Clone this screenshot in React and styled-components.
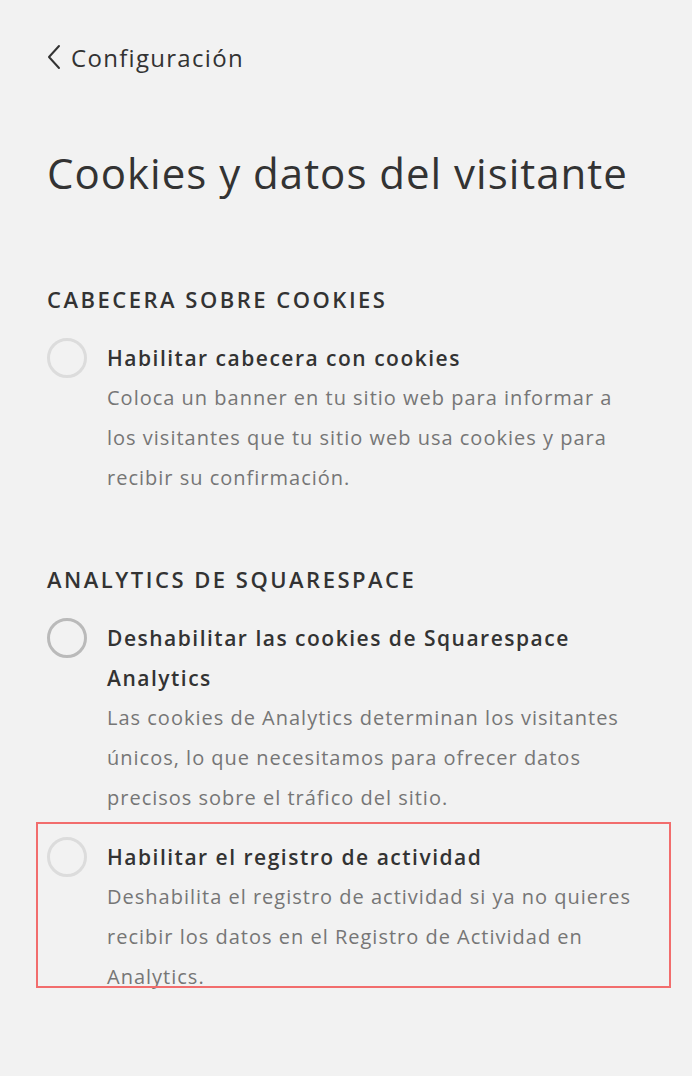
import React from 'react';
import styled, { createGlobalStyle } from 'styled-components';

const GlobalStyle = createGlobalStyle`
  html, body {
    margin: 0;
    padding: 0;
    background: #f2f2f2;
  }
  body {
    font-family: "Open Sans", "Liberation Sans", sans-serif;
    color: #333;
  }
`;

const Page = styled.div`
  width: 692px;
  min-height: 1076px;
  box-sizing: border-box;
  padding: 36px 20px 0 47px;
  background: #f2f2f2;
`;

const BackLink = styled.a`
  display: flex;
  align-items: center;
  gap: 10px;
  height: 42px;
  font-size: 24px;
  letter-spacing: 1.3px;
  color: #333;
  text-decoration: none;
  cursor: pointer;
`;

const Title = styled.h1`
  margin: 71px 0 0;
  font-size: 42px;
  font-weight: 400;
  line-height: 48px;
  letter-spacing: 1px;
  color: #333;
`;

const Section = styled.section`
  margin-top: ${props => props.first ? '82px' : '61px'};
`;

const SectionHeader = styled.h2`
  margin: 0;
  font-size: 22px;
  font-weight: 600;
  line-height: 40px;
  letter-spacing: 2.5px;
  text-transform: uppercase;
  color: #333;
`;

const Item = styled.div`
  position: relative;
  display: flex;
  gap: 20px;
  margin-top: 19px;
`;

const Highlight = styled.div`
  position: absolute;
  left: -11px;
  top: -15px;
  right: 1px;
  bottom: 9px;
  border: 2px solid #f26d6d;
  pointer-events: none;
`;

const Radio = styled.span`
  flex: none;
  width: 40px;
  height: 40px;
  box-sizing: border-box;
  border-radius: 50%;
  border: 3px solid ${props => props.dark ? '#bababa' : '#dcdcdc'};
`;

const Body = styled.div`
  width: 528px;
`;

const ItemTitle = styled.div`
  font-size: 21px;
  font-weight: 600;
  line-height: 40px;
  letter-spacing: 1.5px;
  color: #333;
`;

const ItemText = styled.div`
  font-size: 20px;
  line-height: 40px;
  letter-spacing: 1px;
  color: #767676;
`;

const Chevron = () => (
  <svg width="14" height="26" viewBox="0 0 14 26" fill="none">
    <path d="M12 2 L2 13 L12 24" stroke="#333" strokeWidth="2" strokeLinecap="round" strokeLinejoin="round" />
  </svg>
);

const App = () => (
  <Page>
    <GlobalStyle />
    <BackLink>
      <Chevron />
      Configuración
    </BackLink>
    <Title>Cookies y datos del visitante</Title>

    <Section first>
      <SectionHeader>Cabecera sobre cookies</SectionHeader>
      <Item>
        <Radio />
        <Body>
          <ItemTitle>Habilitar cabecera con cookies</ItemTitle>
          <ItemText>
            Coloca un banner en tu sitio web para informar a los visitantes que tu sitio web usa cookies y para recibir su confirmación.
          </ItemText>
        </Body>
      </Item>
    </Section>

    <Section>
      <SectionHeader>Analytics de Squarespace</SectionHeader>
      <Item>
        <Radio dark />
        <Body>
          <ItemTitle>Deshabilitar las cookies de Squarespace Analytics</ItemTitle>
          <ItemText>
            Las cookies de Analytics determinan los visitantes únicos, lo que necesitamos para ofrecer datos precisos sobre el tráfico del sitio.
          </ItemText>
        </Body>
      </Item>
      <Item>
        <Highlight />
        <Radio />
        <Body>
          <ItemTitle>Habilitar el registro de actividad</ItemTitle>
          <ItemText>
            Deshabilita el registro de actividad si ya no quieres recibir los datos en el Registro de Actividad en Analytics.
          </ItemText>
        </Body>
      </Item>
    </Section>
  </Page>
);

export default App;
